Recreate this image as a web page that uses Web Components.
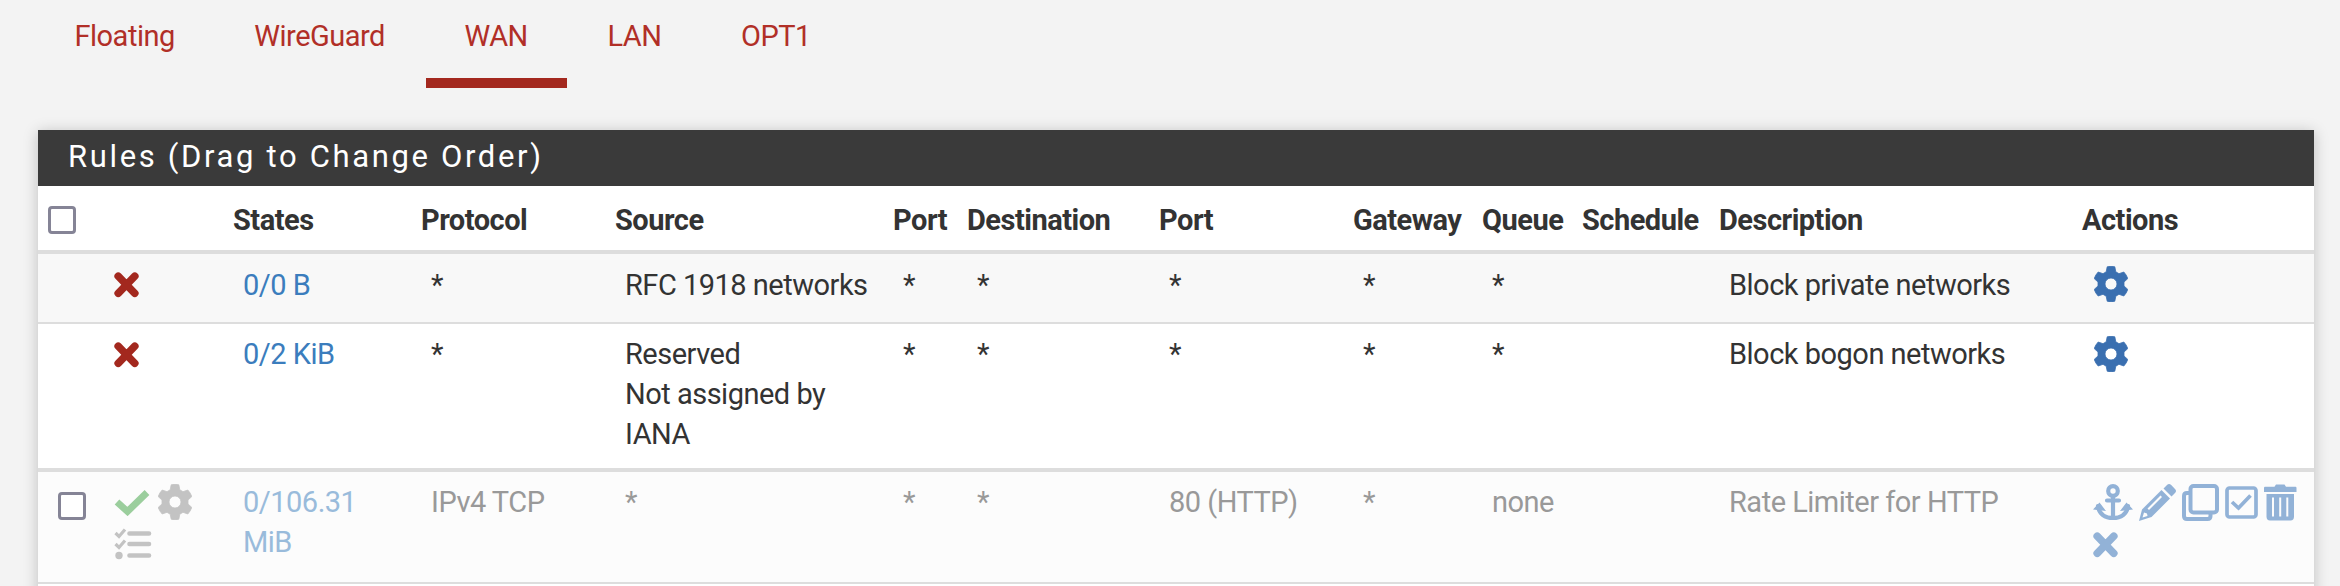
<!DOCTYPE html>
<html lang="en"><head><meta charset="utf-8"><title>Firewall Rules</title>
<style>html,body{margin:0;background:#f3f3f3}body{height:586px;overflow:hidden;font:29px/40px Roboto,sans-serif;letter-spacing:-.5px;color:#333}</style></head>
<body>
<fw-page></fw-page>
<script>
const ICONS={
x:[25,26,'<path d="M4.2 4.2 20.8 21.3M20.8 4.2 4.2 21.3" fill="none" stroke="currentColor" stroke-width="7.6" stroke-linecap="round"/>'],
check:[36,28,'<path d="M3 14 13.5 23.5 33 4.5" fill="none" stroke="currentColor" stroke-width="6.8"/>'],
gear:[34,36,'<path fill-rule="evenodd" fill="currentColor" stroke="currentColor" stroke-width=".8" d="M13.2.8Q17-.2 20.8.8L21.8 5.8 25 7.7 29.8 6Q32.5 8.800 33.800 12.600L30 16 30 20 33.800 23.400Q32.5 27.200 29.800 30L25 28.300 21.800 30.200 20.800 35.200Q17 36.200 13.200 35.200L12.200 30.200 9 28.300 4.200 30Q1.500 27.200.2 23.400L4 20 4 16 .2 12.600Q1.500 8.800 4.200 6L9 7.700 12.200 5.800ZM17 12a6 6 0 1 0 0 12a6 6 0 1 0 0-12Z"/>'],
list:[38,32,'<g fill="none" stroke="currentColor"><path d="M15.500 5.500H35M15.500 16H35M15.500 27.500H35" stroke-width="4.600" stroke-linecap="round"/><path d="m1.500 5 3.500 3.500 6-7M1.500 16l3.500 3.500 6-7" stroke-width="3.200"/></g><circle cx="5" cy="27.500" r="3.700" fill="currentColor"/>'],
anchor:[40,37,'<g fill="none" stroke="currentColor" stroke-width="4.200"><circle cx="20" cy="7" r="4.800"/><path d="M20 12V33M14 16.500H26M5 22C6 30 12 34 20 34S34 30 35 22" stroke-linecap="round"/></g><path fill="currentColor" d="M6.500 18.500 0 25.500 13 27ZM33.500 18.500 40 25.500 27 27Z"/>'],
pencil:[37,37,'<path fill="currentColor" fill-rule="evenodd" d="M22.500 6 31 14.500 12.500 33 0 37 3 25.500ZM5 28.500 3.500 33.500 8.500 32 8 29.500ZM21.500 11.500 8.500 24.500 10 26 23 13ZM24.500 4.500 28 1Q30-.8 32.200 1L36 5Q38 7 36 9L32.500 12.500Z"/>'],
clone:[37,37,'<g fill="none" stroke="currentColor" stroke-width="4" stroke-linejoin="round"><rect x="8.500" y="2" width="26.500" height="26.500" rx="3"/><path d="M8 9H5Q2 9 2 12V32Q2 35 5 35H25.500Q28.500 35 28.500 32V29"/></g>'],
box:[33,33,'<g fill="none" stroke="currentColor" stroke-width="3.700"><rect x="2" y="2" width="29" height="29" rx="2.500"/><path d="m7 16 6.500 6 12-12.500"/></g>'],
trash:[33,37,'<path fill="currentColor" fill-rule="evenodd" d="M12 .5H20.500L22 2.800H31.500Q32.500 2.800 32.500 4V8H0V4Q0 2.800 1 2.800H10.500ZM2.500 10H30V32.500Q30 36.500 26.500 36.500H6Q2.500 36.500 2.500 32.500ZM8 13.500V32.500H10V13.500ZM15.200 13.500V32.500H17.200V13.500ZM22.300 13.500V32.500H24.300V13.500Z"/>']};
const define=(n,html,fn)=>customElements.define(n,class extends HTMLElement{
 constructor(){super();this.attachShadow({mode:'open'}).innerHTML=html}
 connectedCallback(){fn&&fn(this)}});
define('fw-icon','<style>:host{display:block;flex:none}svg{display:block}</style>',e=>{const[w,h,p]=ICONS[e.getAttribute('name')];
 e.shadowRoot.innerHTML+=`<svg width="${w}" height="${h}" viewBox="0 0 ${w} ${h}">${p}</svg>`});
define('fw-check','<style>:host{display:block;box-sizing:border-box;width:28px;height:28px;border:3px solid #858496;border-radius:4px;background:#fff}</style>');
define('fw-tab','<style>:host{display:block;padding:16px 39px 0;box-sizing:border-box;height:88px;color:#b12f27;border-bottom:10px solid transparent;white-space:nowrap}:host([active]){border-color:#a3281e}</style><slot></slot>');
define('fw-cell','<style>:host{display:block;padding:var(--top,11px) 10px 16px 20px;white-space:nowrap}:host([link]){color:#3b7dbd}</style><slot></slot>');
define('fw-row',`<style>:host{display:grid;grid-template-columns:65px 120px 188px 194px 278px 74px 192px 194px 129px 100px 137px 363px 1fr;height:var(--h);box-sizing:border-box;border-bottom:var(--line,2px) solid #ddd;background:var(--bg,#fff)}
:host([head]){font-weight:700}:host([head]) ::slotted(fw-cell){padding-left:10px;padding-top:14px}</style><slot></slot>`);
define('fw-panel',`<style>:host{display:block;background:#fff;box-shadow:0 2px 14px rgba(0,0,0,.22)}header{height:56px;background:#3a3a3a;color:#fff;font-size:31px;line-height:54px;letter-spacing:2.65px;padding-left:30px}</style><header><slot name="title"></slot></header><slot></slot>`);
const cell=(t,a='')=>`<fw-cell ${a}>${t}</fw-cell>`, ic=(n,s='')=>`<fw-icon name="${n}" style="${s}"></fw-icon>`;
define('fw-page',`<style>:host{display:block}nav{display:flex;gap:1.6px;padding-left:35.5px;height:130px;box-sizing:border-box}fw-panel{margin:0 26px 0 38px;height:480px}
.i{display:flex;flex-wrap:wrap;align-items:center}.dim{color:#999}.dim fw-cell[link]{color:#99bbdb}fw-cell.ic{padding:0}</style>
<nav><fw-tab>Floating</fw-tab><fw-tab>WireGuard</fw-tab><fw-tab active>WAN</fw-tab><fw-tab>LAN</fw-tab><fw-tab>OPT1</fw-tab></nav>
<fw-panel><span slot="title">Rules (Drag to Change Order)</span>
<fw-row head style="--h:68px;--line:4px">${cell('<fw-check style="margin:6px 0 0"></fw-check>')}${['','States','Protocol','Source','Port','Destination','Port','Gateway','Queue','Schedule','Description','Actions'].map(t=>cell(t)).join('')}</fw-row>
<fw-row style="--h:70px;--bg:#f8f8f8">${cell('')}${cell(ic('x','color:#a3281e;padding:18px 0 0 11px'),'class="ic"')}${cell('0/0 B','link')}${cell('*')}${cell('RFC 1918 networks')}${['*','*','*','*','*','','Block private networks'].map(t=>cell(t)).join('')}${cell(ic('gear','color:#3a6fb0;padding:12px 0 0 22px'),'class="ic"')}</fw-row>
<fw-row style="--h:148px;--line:4px;--top:10px">${cell('')}${cell(ic('x','color:#a3281e;padding:18px 0 0 11px'),'class="ic"')}${cell('0/2 KiB','link')}${cell('*')}${cell('Reserved<br>Not assigned by<br>IANA')}${['*','*','*','*','*','','Block bogon networks'].map(t=>cell(t)).join('')}${cell(ic('gear','color:#3a6fb0;padding:12px 0 0 22px'),'class="ic"')}</fw-row>
<fw-row class="dim" style="--h:112px;--bg:#fcfcfc;--top:10px">${cell('<fw-check style="margin:10px 0 0"></fw-check>')}${cell('<div class="i" style="padding:12px 0 0 11px;gap:8px;color:#c3c3c3">'+ic('check','color:#9bce9d')+ic('gear')+ic('list')+'</div>','class="ic"')}${cell('0/106.31<br>MiB','link')}${['IPv4 TCP','*','*','*','80 (HTTP)','*','none','','Rate Limiter for HTTP'].map(t=>cell(t)).join('')}${cell('<div class="i" style="padding:12px 0 0 21px;column-gap:6px;row-gap:11px;color:#92b2d7">'+['anchor','pencil','clone','box','trash','x'].map(n=>ic(n)).join('')+'</div>','class="ic"')}</fw-row>
</fw-panel>`);
</script></body></html>
